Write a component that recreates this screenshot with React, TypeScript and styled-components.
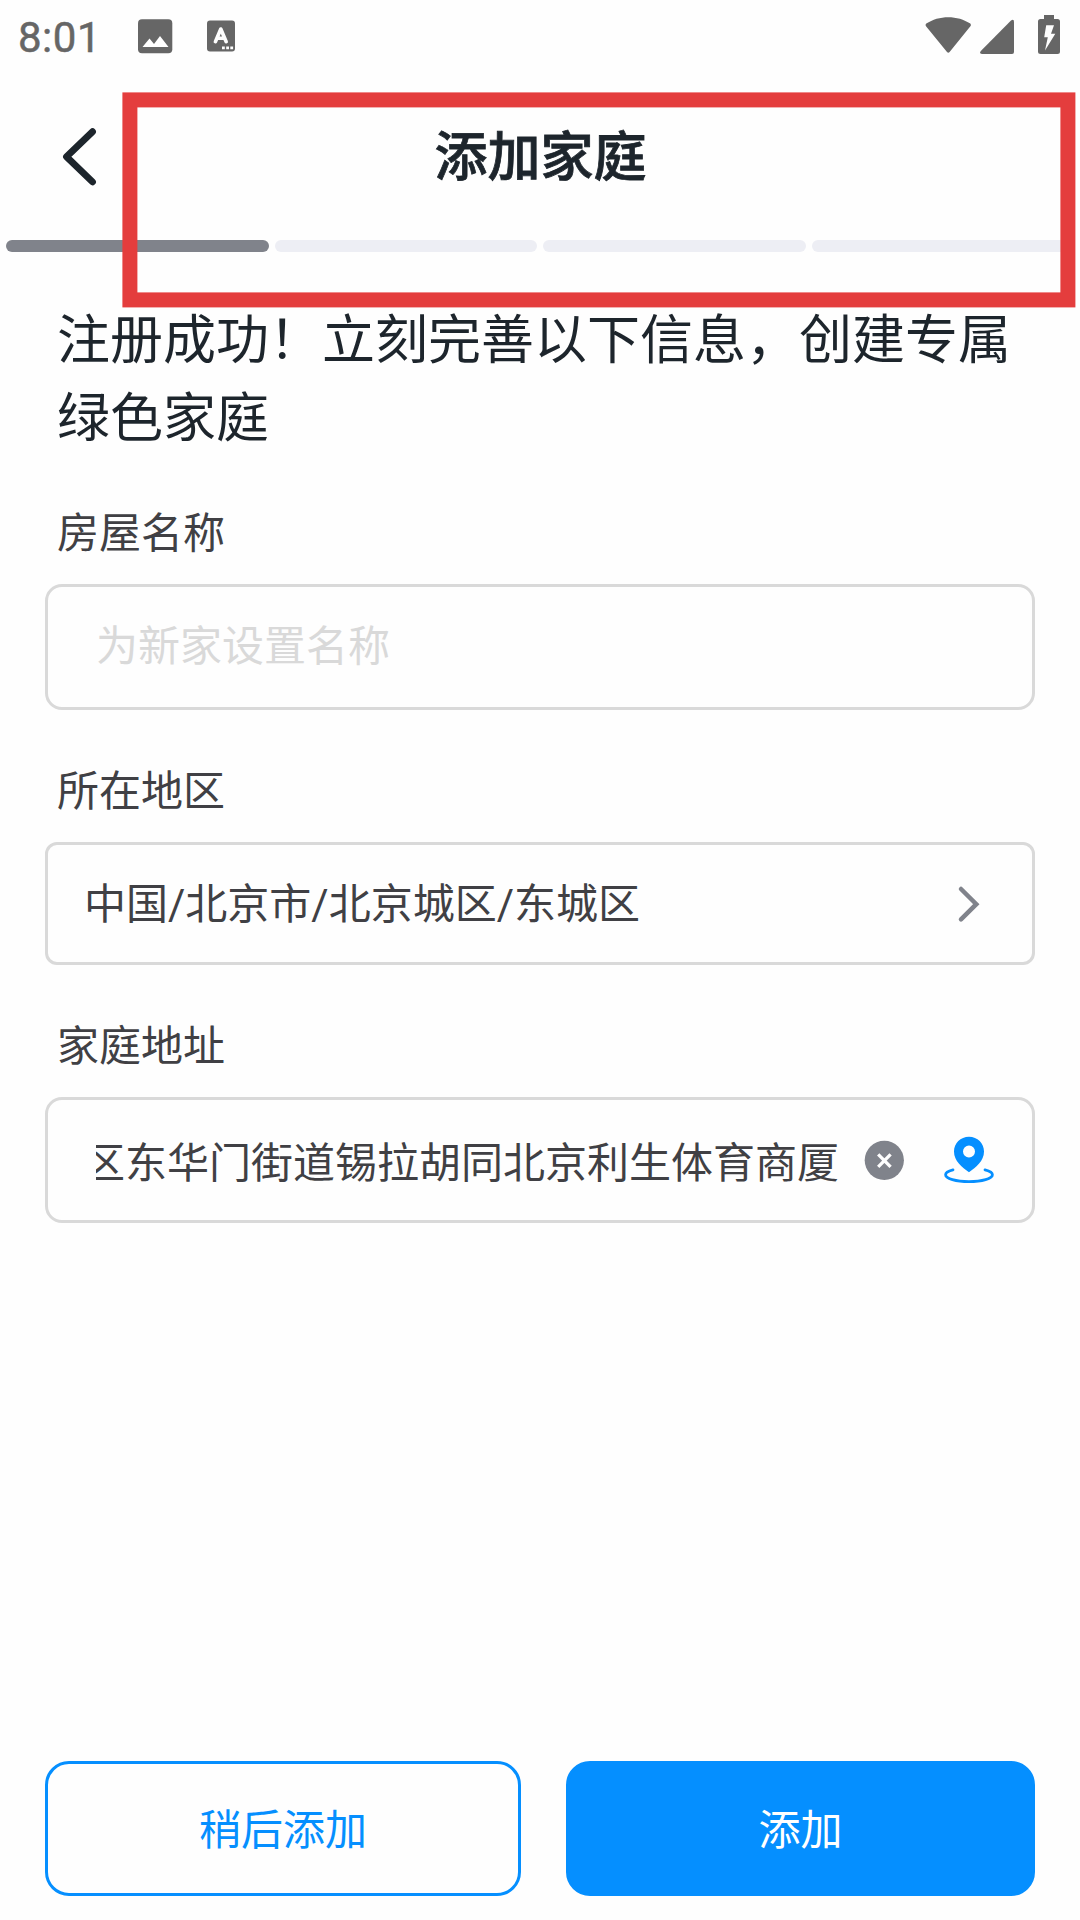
import React from "react";
import styled, { createGlobalStyle } from "styled-components";

const GlobalStyle = createGlobalStyle`
  *, *::before, *::after { box-sizing: border-box; }
  body {
    margin: 0;
    background: #fefefe;
    font-family: Roboto, "Noto Sans CJK SC", sans-serif;
  }
`;

const Screen = styled.div`
  position: relative;
  display: flex;
  flex-direction: column;
  width: 1080px;
  height: 1920px;
  overflow: hidden;
  background: #fefefe;
  font-family: "Noto Sans CJK SC", sans-serif;
`;

const StatusBar = styled.div`
  display: flex;
  justify-content: space-between;
  height: 74px;
  padding: 0 20px 0 18px;
  color: #666;
`;

const StatusGroup = styled.div`
  display: flex;
  align-items: flex-start;
  svg { display: block; flex: none; }
`;

const Clock = styled.span`
  width: 120px;
  padding-top: 13px;
  font: 400 42px/50px Roboto, sans-serif;
  letter-spacing: 0.5px;
  -webkit-text-stroke: 0.5px #666;
`;

const StatusIcon = styled.svg<{ $left?: number; $top: number }>`
  margin-left: ${(p) => p.$left ?? 0}px;
  margin-top: ${(p) => p.$top}px;
`;

const Header = styled.header`
  display: grid;
  grid-template-columns: 160px 1fr 160px;
  align-items: center;
  height: 158px;
`;

const BackButton = styled.button`
  display: flex;
  padding: 7px 0 0 60px;
  border: 0;
  background: none;
  svg { display: block; }
`;

const Title = styled.h1`
  margin: 0;
  padding-left: 1px;
  text-align: center;
  font-size: 53px;
  line-height: 76px;
  font-weight: 500;
  -webkit-text-stroke: 0.8px #1d252c;
  color: #1d252c;
`;

const Progress = styled.div`
  display: flex;
  gap: 6px;
  margin-top: 8px;
  padding: 0 6px;
`;

const Segment = styled.span<{ $active?: boolean }>`
  flex: 1;
  height: 12px;
  border-radius: 6px;
  background: ${(p) => (p.$active ? "#80838b" : "#edeef4")};
`;

const Intro = styled.p`
  margin: 45px 0 0;
  padding: 0 57px;
  font-size: 53px;
  line-height: 78px;
  color: #1d252c;
`;

const Form = styled.form`
  display: flex;
  flex-direction: column;
  gap: 48px;
  margin-top: 47px;
  padding: 0 45px;
`;

const Field = styled.div`
  display: flex;
  flex-direction: column;
  gap: 24px;
`;

const Label = styled.label`
  padding-left: 12px;
  font-size: 42px;
  line-height: 60px;
  color: #404044;
`;

const Box = styled.div<{ $h: number; $r: number; $pad: string }>`
  display: flex;
  align-items: center;
  height: ${(p) => p.$h}px;
  padding: ${(p) => p.$pad};
  border: 3px solid #d9d9d9;
  border-radius: ${(p) => p.$r}px;
  font-size: 42px;
  line-height: 60px;
  color: #404044;
  svg { display: block; flex: none; }
`;

const Placeholder = styled.span`
  color: #d9d9d9;
`;

const Region = styled.span`
  flex: 1;
  padding-top: 3px;
  font-family: Roboto, "Noto Sans CJK SC", sans-serif;
  white-space: nowrap;
`;

/* Keeps the tail of a long address visible, as when the caret sits at its end. */
const AddressValue = styled.span`
  display: flex;
  justify-content: flex-end;
  width: 743px;
  overflow: hidden;
  white-space: nowrap;
`;

const ClearIcon = styled.svg`
  margin-left: 25px;
`;

const PinIcon = styled.svg`
  margin-left: 38px;
`;

const Actions = styled.footer`
  display: grid;
  grid-template-columns: 476px 469px;
  gap: 45px;
  margin-top: auto;
  padding: 0 45px 24px;
`;

const ActionButton = styled.button<{ $primary?: boolean }>`
  height: 135px;
  padding: 0 0 4px;
  border: 3px solid #058fff;
  border-radius: 24px;
  background: ${(p) => (p.$primary ? "#058fff" : "transparent")};
  color: ${(p) => (p.$primary ? "#fff" : "#058fff")};
  font-family: inherit;
  font-size: 42px;
  line-height: 60px;
`;

/* Red rectangle annotated over the header area. */
const Highlight = styled.div`
  position: absolute;
  left: 122px;
  top: 92px;
  width: 953px;
  height: 215px;
  border: 15px solid #e43d3d;
  transform: translate(0.4px, 0.4px);
  pointer-events: none;
`;

export default function App() {
  return (
    <>
      <GlobalStyle />
      <Screen>
        <StatusBar>
          <StatusGroup>
            <Clock>8:01</Clock>
            <StatusIcon $top={19} width="35" height="35" viewBox="0 0 35 35">
              <rect x="0" y="0.3" width="34.3" height="34" rx="4" fill="currentColor" />
              <path d="M4.5 28 L11.5 19.5 L16 25 L22 17 L30.5 28 Z" fill="#fefefe" />
            </StatusIcon>
            <StatusIcon $left={34} $top={20} width="28" height="32" viewBox="0 0 28 32">
              <rect x="0" y="0.5" width="28" height="31" rx="3" fill="currentColor" />
              <path d="M8.4 21.7 L13.8 9 L19.2 21.7 M10.4 18.2 H17.2" fill="none" stroke="#fefefe" strokeWidth="3.6" strokeLinecap="round" strokeLinejoin="round" />
              <path d="M15 26.4h2.8v2.8H15z M19.2 26.4H22v2.8h-2.8z M23.3 26.4h2.8v2.8h-2.8z" fill="#fefefe" />
            </StatusIcon>
          </StatusGroup>
          <StatusGroup>
            <StatusIcon $top={16} width="46" height="38" viewBox="0 0 46 38">
              <path d="M1.300 7.600 C13.500 -1 33 -1 45.300 7.600 Q46.400 8.800 45.400 10.300 L24.600 36 Q23.300 37.600 22 36 L1 10.300 Q0 8.800 1.300 7.600 Z" fill="currentColor" />
            </StatusIcon>
            <StatusIcon $left={9} $top={19} width="34" height="35" viewBox="0 0 34 35">
              <path d="M31 1.500 Q34 -0.500 34 3 V33 Q34 35 32 35 H2 Q-1.200 35 0.800 32 Z" fill="currentColor" />
            </StatusIcon>
            <StatusIcon $left={24} $top={15} width="22" height="39" viewBox="0 0 22 39">
              <path d="M6 0 H16 V4 H19.500 Q22 4 22 6.500 V36.500 Q22 39 19.500 39 H2.500 Q0 39 0 36.500 V6.500 Q0 4 2.500 4 H6 Z" fill="currentColor" />
              <path d="M8.200 10.300 H16 L13 18.800 H17.300 L7 35.500 L9.800 22.300 H6.200 Z" fill="#fefefe" />
            </StatusIcon>
          </StatusGroup>
        </StatusBar>

        <Header>
          <BackButton aria-label="返回" type="button">
            <svg width="40" height="60" viewBox="0 0 40 60">
              <path d="M32.500 4.700 L6.500 29.700 L32.500 54.900" fill="none" stroke="#1d252c" strokeWidth="6.800" strokeLinecap="round" strokeLinejoin="round" />
            </svg>
          </BackButton>
          <Title>添加家庭</Title>
        </Header>

        <Progress>
          <Segment $active />
          <Segment />
          <Segment />
          <Segment />
        </Progress>

        <Intro>注册成功！立刻完善以下信息，创建专属绿色家庭</Intro>

        <Form>
          <Field>
            <Label>房屋名称</Label>
            <Box $h={126} $r={17} $pad="0 48px 8px 48px">
              <Placeholder>为新家设置名称</Placeholder>
            </Box>
          </Field>
          <Field>
            <Label>所在地区</Label>
            <Box $h={123} $r={12} $pad="0 52px 0 36px">
              <Region>中国/北京市/北京城区/东城区</Region>
              <svg width="24" height="40" viewBox="0 0 24 40">
                <path d="M5 5 L20.300 20.200 L5 35.300" fill="none" stroke="#80838b" strokeWidth="4.500" strokeLinecap="round" />
              </svg>
            </Box>
          </Field>
          <Field>
            <Label>家庭地址</Label>
            <Box $h={126} $r={17} $pad="0 0 0 48px">
              <AddressValue>区东华门街道锡拉胡同北京利生体育商厦</AddressValue>
              <ClearIcon width="40" height="40" viewBox="0 0 40 40">
                <circle cx="20.300" cy="20.300" r="19.600" fill="#80838b" />
                <path d="M14.200 14.400 L26.600 26.800 M26.600 14.400 L14.200 26.800" stroke="#fefefe" strokeWidth="3.300" />
              </ClearIcon>
              <PinIcon width="54" height="50" viewBox="0 0 54 50">
                <path fillRule="evenodd" d="M27 1.700 C18.500 1.700 12 8.200 12 16.600 C12 26 20 32.500 27 37.300 C34 32.500 42 26 42 16.600 C42 8.200 35.500 1.700 27 1.700 Z M27 10.600 A6 6 0 1 1 27 22.600 A6 6 0 0 1 27 10.600 Z" fill="#058fff" />
                <path d="M11 34.800 C6 36 3.600 38 3.600 39.800 C3.600 43.700 14 46.700 27 46.700 C40 46.700 50.400 43.700 50.400 39.800 C50.400 38 48 36 43 34.800" fill="none" stroke="#058fff" strokeWidth="2.800" strokeLinecap="round" />
              </PinIcon>
            </Box>
          </Field>
        </Form>

        <Actions>
          <ActionButton type="button">稍后添加</ActionButton>
          <ActionButton type="button" $primary>添加</ActionButton>
        </Actions>

        <Highlight />
      </Screen>
    </>
  );
}
